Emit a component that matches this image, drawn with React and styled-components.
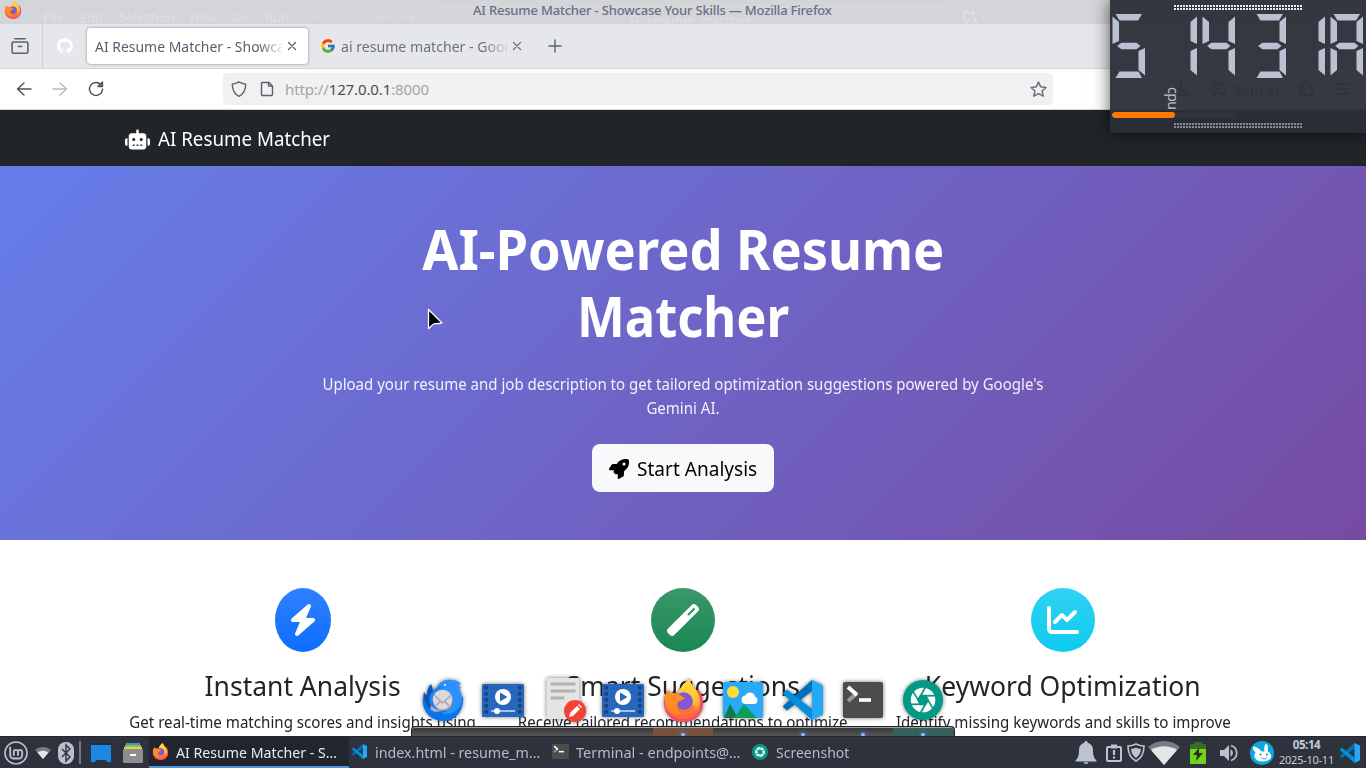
import React from "react";
import styled, { createGlobalStyle, css } from "styled-components";
import { FaRobot, FaRocket, FaBolt, FaWandMagic, FaChartLine, FaGithub } from "react-icons/fa6";
import { FcGoogle } from "react-icons/fc";

const GlobalStyle = createGlobalStyle`
  * { box-sizing: border-box; }
  body { margin: 0; background: #fff; font-family: "Noto Sans", sans-serif; }
  svg { display: block; flex: none; }
  h1, h3, p { margin: 0; }
`;

const Desktop = styled.div`
  position: relative;
  display: flex;
  flex-direction: column;
  width: 1366px;
  height: 768px;
  overflow: hidden;
  white-space: nowrap;
`;

/* Single run of text; $ls tightens its spacing, $sx condenses its letters */
const Text = styled.span`
  display: block;
  flex: none;
  width: ${(p) => (p.$w ? `${p.$w}px` : "auto")};
  letter-spacing: ${(p) => p.$ls || 0}px;
  white-space: nowrap;
  ${(p) => p.$sx && css`
    transform: scaleX(${p.$sx});
    transform-origin: ${p.$left ? "left" : "center"};
  `}
`;

/* ---------- window title ---------- */
const TitleBar = styled.header`
  position: relative;
  flex: none;
  height: 24px;
  background: #d4d5d8;
  overflow: hidden;
`;
const GhostMenu = styled.div`
  display: flex;
  align-items: center;
  height: 24px;
  padding: 10px 0 0 15px;
  font-size: 13px;
  line-height: 14px;
  color: #dfe0e3;
`;
const GhostItem = styled.span`
  flex: none;
  width: ${(p) => p.$w}px;
`;
const GhostSearch = styled.div`
  display: flex;
  justify-content: center;
  gap: 6px;
  width: 521px;
  height: 30px;
  margin-top: 10px;
  padding-top: 5px;
  border: 1px solid #dadbdd;
  border-radius: 6px;
`;
const WindowTitle = styled.div`
  position: absolute;
  inset: 0;
  padding-left: 473px;
  color: #687086;
  font-size: 13px;
  font-weight: 500;
  line-height: 21px;
`;
const WindowIcon = styled.div`
  position: absolute;
  left: 4px;
  top: 1px;
`;

/* ---------- tabs ---------- */
const TabStrip = styled.nav`
  display: flex;
  align-items: center;
  flex: none;
  height: 45px;
  background: #e6e7eb;
  border-bottom: 1px solid #d5d6da;
  color: #5b5f70;
  font-size: 15px;
`;
const SidebarButton = styled.div`
  display: flex;
  align-items: center;
  justify-content: center;
  width: 43px;
  height: 44px;
  padding-right: 3px;
  border-right: 1px solid #cfd0d5;
`;
const PinnedTab = styled.div`
  display: flex;
  justify-content: center;
  width: 44px;
  color: #fff;
`;
const Tab = styled.div`
  display: flex;
  align-items: center;
  gap: 3px;
  height: 36px;
  width: ${(p) => p.$w}px;
  padding: 0 8px;
  margin-left: ${(p) => p.$ml || 0}px;
  border-radius: 4px;
  color: #6c7085;
  ${(p) => p.$active && css`
    background: #fff;
    color: #5a5d6d;
    box-shadow: 0 0 3px rgba(60, 60, 70, 0.55);
  `}
`;
const TabLabel = styled.div`
  flex: none;
  width: ${(p) => p.$w}px;
  margin-left: ${(p) => p.$l || 0}px;
  overflow: hidden;
  mask-image: linear-gradient(90deg, #000 calc(100% - 24px), rgba(0, 0, 0, 0.15));
`;
const NewTab = styled.div`
  margin-left: 25px;
`;

/* ---------- address bar ---------- */
const Toolbar = styled.div`
  display: flex;
  align-items: center;
  flex: none;
  height: 41px;
  padding-left: 16px;
  background: #fff;
  border-bottom: 1px solid #d5d6da;
  color: #4c4f5c;
`;
const NavButtons = styled.div`
  display: flex;
  gap: 20px;
  width: 207px;
`;
const UrlField = styled.div`
  display: flex;
  align-items: center;
  width: 830px;
  height: 32px;
  padding: 0 8px;
  border-radius: 4px;
  background: #f1f1f1;
  font-size: 15px;
  color: #a3a4a9;
`;
const UrlIcons = styled.div`
  display: flex;
  gap: 12px;
  width: 54px;
  color: #5d6070;
`;
const Host = styled.b`
  font-weight: 400;
  color: #4a4d59;
`;
const StarSlot = styled.div`
  margin-left: auto;
  margin-right: -2px;
  color: #6a6d7c;
`;
const Extras = styled.div`
  display: flex;
  align-items: center;
  gap: 8px;
  margin-left: 120px;
  color: #6b6e7a;
  font-size: 14px;
`;

/* ---------- site ---------- */
const SiteNav = styled.div`
  display: flex;
  align-items: center;
  gap: 8px;
  flex: none;
  height: 56px;
  padding: 2px 0 0 125px;
  background: #212529;
  color: #fff;
  font-size: 20px;
  line-height: 30px;
`;
const Hero = styled.section`
  display: flex;
  flex-direction: column;
  align-items: center;
  flex: none;
  height: 374px;
  padding: 48px 0;
  background: linear-gradient(135deg, #667eea 0%, #764ba2 100%);
  color: #fff;
  text-align: center;
`;
const HeroTitle = styled.h1`
  display: flex;
  flex-direction: column;
  align-items: center;
  padding-top: 1px;
  margin-bottom: 23px;
  font-size: 55px;
  font-weight: 700;
  line-height: 67.2px;
`;
const Lead = styled.p`
  display: flex;
  flex-direction: column;
  align-items: center;
  margin-bottom: 24px;
  font-size: 16px;
  line-height: 24px;
  color: rgba(255, 255, 255, 0.9);
`;
const StartButton = styled.button`
  display: flex;
  align-items: center;
  gap: 8px;
  width: 182px;
  height: 48px;
  padding: 2px 0 0 17px;
  border: 0;
  border-radius: 8px;
  background: #f8f9fa;
  color: #000;
  font: 400 20px/30px "Noto Sans", sans-serif;
`;
const Features = styled.section`
  display: grid;
  grid-template-columns: repeat(3, 380px);
  justify-content: center;
  flex: none;
  height: 196px;
  padding-top: 48px;
  overflow: hidden;
  background: #fff;
  color: #212529;
`;
const Feature = styled.article`
  display: flex;
  flex-direction: column;
  align-items: center;
`;
const Disc = styled.div`
  display: flex;
  align-items: center;
  justify-content: center;
  width: ${(p) => p.$w}px;
  height: 64px;
  margin-bottom: 16.5px;
  border-radius: 50%;
  background: linear-gradient(180deg, ${(p) => p.$from}, ${(p) => p.$to});
  color: #fff;
`;
const FeatureTitle = styled.h3`
  margin-bottom: 8px;
  font-size: 28px;
  font-weight: 400;
  line-height: 33.6px;
`;
const FeatureText = styled.p`
  font-size: 16px;
  line-height: 24px;
`;

/* ---------- desktop clock widget ---------- */
const Widget = styled.aside`
  position: absolute;
  top: 0;
  right: 0;
  display: flex;
  flex-direction: column;
  width: 256px;
  height: 133px;
  padding: 5px 2px 0;
  background: rgba(42, 45, 55, 0.945);
  box-shadow: 0 0 16px rgba(0, 0, 0, 0.65);
`;
const Grip = styled.div`
  flex: none;
  width: 128px;
  height: 5px;
  margin-left: 62px;
  background:
    repeating-linear-gradient(90deg, transparent 0 2px, #30343e 2px 3px),
    linear-gradient(${(p) => p.$c} 0 2px, transparent 2px 3px, ${(p) => p.$c} 3px);
`;
const CpuLabel = styled.div`
  flex: none;
  width: 18px;
  height: 31px;
  padding-top: 9px;
  margin-left: 52px;
  writing-mode: vertical-rl;
  font-size: 14px;
  letter-spacing: -0.5px;
  line-height: 18px;
  color: #b9c1d0;
`;
const CpuTrack = styled.div`
  flex: none;
  width: 124px;
  height: 6px;
  margin: 3px 0 5px;
  border-radius: 3px;
  background: #30323d;
  overflow: hidden;
`;
const CpuFill = styled.div`
  width: 63px;
  height: 6px;
  border-radius: 3px;
  background: #ff7b00;
`;

/* ---------- dock ---------- */
const Dock = styled.div`
  position: absolute;
  left: 411px;
  top: 676px;
  width: 544px;
  height: 60px;
`;
const Shelf = styled.div`
  position: absolute;
  left: 0;
  right: 0;
  bottom: 0;
  display: grid;
  grid-template-columns: repeat(9, 60px);
  padding: 0 1px;
  height: 10px;
  border: 1px solid #222;
  border-bottom: 0;
  border-radius: 4px 4px 0 0;
  box-shadow: inset 0 1px 0 #a0a0a0;
  background: linear-gradient(#333, #565656);
`;
const Slot = styled.div`
  display: flex;
  justify-content: center;
  align-items: flex-end;
  margin-top: 1px;
  background: ${(p) => p.$tint || "transparent"};
`;
const Glow = styled.i`
  width: 4px;
  height: 3px;
  border-radius: 2px;
  background: #8ab8ff;
  box-shadow: 0 0 4px 1px rgba(70, 130, 230, 0.7);
`;
const DockIcons = styled.div`
  position: relative;
  display: grid;
  grid-template-columns: repeat(9, 60px);
  justify-items: center;
  align-items: center;
  height: 48px;
  padding-left: 2px;
  filter: drop-shadow(0 0 2px rgba(0, 0, 0, 0.55));
`;
const Cursor = styled.div`
  position: absolute;
  left: 425px;
  top: 307px;
`;

/* ---------- task bar ---------- */
const TaskBar = styled.footer`
  display: flex;
  align-items: center;
  flex: none;
  height: 32px;
  background: #2d323c;
  border-top: 1px solid #23272e;
  color: #b3bccb;
  font-size: 15px;
  z-index: 2;
`;
const Launchers = styled.div`
  display: flex;
  align-items: center;
  width: 149px;
  padding-left: 4px;
`;
const Task = styled.div`
  display: flex;
  align-items: center;
  gap: 8px;
  width: 200px;
  height: 31px;
  padding: 0 0 2px 3px;
  ${(p) => p.$active && css`
    background: #21252c;
    color: #e8ecf2;
    box-shadow: inset 0 -2px #5294e2;
  `}
`;
const TaskIcon = styled.div`
  display: flex;
  justify-content: center;
  width: 16px;
`;
const Divider = styled.i`
  width: 2px;
  height: 23px;
  margin: 0 10px 0 5px;
  background: #727883;
`;
const Tray = styled.div`
  display: flex;
  align-items: center;
  margin-left: auto;
  padding-right: 6px;
  color: #bcc3d0;
`;
const Clock = styled.div`
  display: flex;
  flex-direction: column;
  align-items: center;
  width: 57px;
  margin: -1px 5px 0 4px;
  font-size: 11px;
  line-height: 15px;
  color: #c5cbd6;
`;
const Time = styled.b`
  font-size: 11.5px;
  letter-spacing: -0.4px;
`;
const Pad = styled.div`
  flex: none;
  margin-left: ${(p) => p.$l || 0}px;
`;

/* ---------- drawings ---------- */
const Line = ({ s = 16, w = 1.4, children, ...r }) => (
  <svg width={s} height={s} viewBox="0 0 16 16" fill="none" stroke="currentColor" strokeWidth={w} strokeLinecap="round" strokeLinejoin="round" {...r}>{children}</svg>
);
const Close = () => <Line s={14}><path d="M4 4l8 8M12 4l-8 8" /></Line>;

function Firefox({ s }) {
  return (
    <svg width={s} height={s} viewBox="0 0 42 44">
      <defs>
        <linearGradient id="fxBody" x1="0" y1="0" x2=".4" y2="1">
          <stop offset="0" stopColor="#ffb02e" /><stop offset=".45" stopColor="#ff7a22" /><stop offset="1" stopColor="#ff6a3c" />
        </linearGradient>
        <linearGradient id="fxFlame" x1="0" y1="0" x2="0" y2="1">
          <stop offset="0" stopColor="#ffe23c" /><stop offset=".6" stopColor="#ffbd35" /><stop offset="1" stopColor="#ff5a4d" />
        </linearGradient>
      </defs>
      <path d="M21 44C8 44 1 35 1 24c0-4 1-9 5-13 0 2 1 3 2 4 3-1 6-1 9 0 1-8 5-11 10-15 1 5 4 7 7 11 3 0 4 2 4 2 2 4 3 8 3 12 0 12-9 19-20 19z" fill="#fb4a66" />
      <path d="M27 0c1 5 5 8 8 13 4 7 4 17-2 23-6 5-14 3-18-2L16 14C18 7 22 4 27 0z" fill="url(#fxFlame)" />
      <circle cx="21" cy="23" r="9.5" fill="#8157d5" />
      <path d="M2 18c1-3 2-5 4-7 0 2 1 3 2 4 4-1 8 0 11 3l3 1c0 3-6 3-7 5-1 6 4 9 9 7 4-2 6-4 9-4-1 5-7 8-12 8 7 2 14-1 18-7-2 8-9 13-17 13C8 41 0 30 2 18z" fill="url(#fxBody)" />
      <path d="M3 25c-1-5 0-10 3-14 0 2 1 3 2 4 4-1 8 0 11 3l3 1c0 3-6 3-7 5-3 5 1 11 6 12-8 2-17-2-18-11z" fill="#ff8b24" />
    </svg>
  );
}

const VsCode = ({ s, ghost }) => (
  <svg width={s} height={s} viewBox="0 0 40 40">
    <path d="M29 0v11L4 30.500l-3.500-3a1.500 1.500 0 0 1 0-2z" fill={ghost ? "#c9d9e6" : "#0071b8"} />
    <path d="M29 40V29L4 9.500l-3.500 3a1.500 1.500 0 0 0 0 2z" fill={ghost ? "#c9d9e6" : "#0090de"} />
    <path d="M29 0l9.500 4.500a2 2 0 0 1 1.500 2v27a2 2 0 0 1-1.500 2L29 40z" fill={ghost ? "#c6dbec" : "#24a8f7"} />
  </svg>
);

const Aperture = ({ s }) => (
  <svg width={s} height={s} viewBox="0 0 40 40">
    <circle cx="20" cy="20" r="20" fill="#049887" />
    <circle cx="20" cy="20" r="12.300" fill="#fff" />
    {[0, 60, 120, 180, 240, 300].map((a) => (
      <path key={a} d="M15 20.500L22.500 7" stroke="#049887" strokeWidth="1.700" transform={`rotate(${a} 20 20)`} />
    ))}
    <path d="M17 14.800h6l3 5.200-3 5.200h-6L14 20z" fill="#049887" />
  </svg>
);

const Terminal = ({ s }) => (
  <svg width={s} height={s * 0.9} viewBox="0 0 40 36">
    <rect width="40" height="36" rx="2" fill="#4c4c4c" />
    <path d="M5 19l8-7" stroke="#9d9d9d" strokeWidth="4" />
    <path d="M5 5l9 8" stroke="#fff" strokeWidth="4" />
    <path d="M16 18h12" stroke="#fff" strokeWidth="3.600" />
  </svg>
);

const Video = () => (
  <svg width="42" height="33" viewBox="0 0 42 33">
    <rect width="42" height="33" rx="1.500" fill="#2666bd" />
    {[1, 7, 13, 19, 25].map((y) => <path key={y} d={`M2.500 ${y + 1}h3.500v3.500H2.500zM36 ${y + 1}h3.500v3.500H36z`} fill="#17437f" />)}
    <circle cx="21" cy="13" r="8" fill="#fff" />
    <path d="M18 8.500l7.500 4.500-7.500 4.500z" fill="#2666bd" />
    <path d="M9 27h24" stroke="#a9c4e8" strokeWidth="2" />
    <circle cx="15" cy="27" r="3" fill="#fff" />
  </svg>
);

const Notes = () => (
  <svg width="48" height="46" viewBox="-5.500 0 48 46">
    <rect x="2" y="1" width="33" height="41" rx="2" fill="#e4e4e4" />
    <path d="M6 7h25M6 14h25M6 21h14" stroke="#b2b2b2" strokeWidth="3" />
    <circle cx="30.500" cy="34" r="11" fill="#f34235" />
    <path d="M24.500 40l1-4 7-7 3 3-7 7z" fill="#fff" />
    <path d="M33.500 28l1-1 3 3-1 1z" fill="#fff" />
  </svg>
);

const Photos = () => (
  <svg width="40" height="36" viewBox="0 0 40 36">
    <rect width="40" height="36" rx="2" fill="#28aaf9" />
    <circle cx="10" cy="10" r="6" fill="#fddc36" />
    <path d="M22 22h10a4 4 0 0 0 0-7.500 5 5 0 0 0-9.500-1A4.300 4.300 0 0 0 22 22z" fill="#fff" />
    <path d="M1 36l6-14 8 14z" fill="#0c7a43" />
    <path d="M11 36l10-14 13 14z" fill="#0f9d58" />
  </svg>
);

const Thunderbird = () => (
  <svg width="42" height="42" viewBox="0 0 42 42">
    <path d="M9 5c2 5 3 8 2 12L8 30C3 27 0 20 2 13c1 2 2 3 3 3 0-5 1-8 4-11z" fill="#0a55b5" />
    <path d="M1 18c3 8 5 12 12 15l20-3 8-13c1 15-7 25-20 25C8 42-1 31 1 18z" fill="#0875ed" />
    <path d="M15 8c3-6 9-8 15-7 4 0 7 2 9 4l-3 1 3 3-2 1c3 4 4 10 2 15-3 8-12 12-20 9 8-2 12-7 12-13-1-7-8-11-16-9z" fill="#2b91ff" />
    <path d="M11 12c3-5 8-5 13-3-5 0-9 2-11 5-4 6-1 14 4 17C8 30 4 19 11 12z" fill="#1c83f5" />
    <circle cx="20.500" cy="20.500" r="9.800" fill="#dadadd" />
    <path d="M12 16l8.500 8 9-8M14 27l4.500-5M27 27l-4.500-5" fill="none" stroke="#a2a2a8" strokeWidth="1.200" />
    <circle cx="23" cy="6" r="1" fill="#fff" />
  </svg>
);

const Mint = () => (
  <svg width="24" height="24" viewBox="0 0 24 24" fill="none" stroke="#bcc2d0" strokeLinecap="round">
    <circle cx="12" cy="12" r="11" strokeWidth="1.600" />
    <path d="M6.200 6.500v7.500a3.500 3.500 0 0 0 3.500 3.500h5a3.500 3.500 0 0 0 3.500-3.500v-3a2.100 2.100 0 0 0-4.200 0v3M14 11a2.100 2.100 0 0 0-4.200 0v3" strokeWidth="1.900" />
  </svg>
);

const Fan = ({ w, h, dim }) => (
  <svg width={w} height={h} viewBox="0 0 32 24">
    <path d="M0 6C9-2 23-2 32 6L16 24z" fill="#777b83" />
    <path d={dim ? "M5 11c7-5 15-5 22 0L16 24z" : "M3 9c8-5 18-5 26 0L16 24z"} fill="#e5e6e8" />
  </svg>
);

const Bluetooth = () => (
  <svg width="16" height="22" viewBox="0 0 16 22">
    <rect width="16" height="22" rx="7.500" fill="#b9bfcd" />
    <path d="M4 7l8 8-4 4V3l4 4-8 8" fill="none" stroke="#2d323c" strokeWidth="1.400" />
  </svg>
);

const DesktopIcon = () => (
  <svg width="20" height="19" viewBox="0 0 20 19">
    <path d="M0 0h20v3H0z" fill="#202d3d" /><path d="M0 2h20v17h-4l-1-2H5l-1 2H0z" fill="#1d87e6" />
  </svg>
);
const Files = () => (
  <svg width="20" height="20" viewBox="0 0 20 20">
    <path d="M3 0h14v2H3z" fill="#4a90d9" /><path d="M2 2h16v2H2z" fill="#79c94c" /><path d="M1 4h18v2H1z" fill="#f3c94b" />
    <rect y="6" width="20" height="14" rx="1" fill="#8e8e8e" /><path d="M7 12h6" stroke="#fff" strokeWidth="2" />
  </svg>
);

const Bell = () => (
  <svg width="22" height="23" viewBox="0 0 22 23" fill="currentColor">
    <path d="M11 0c1 0 1.600.7 1.600 1.700C16 2.500 18 5 18 9c0 6 1 8 3.500 10.500v1h-21v-1C3 17 4 15 4 9c0-4 2-6.500 5.400-7.300C9.400.7 10 0 11 0zM8.500 21.300h5a2.500 1.700 0 0 1-5 0z" />
  </svg>
);
const Clipboard = () => (
  <svg width="16" height="18" viewBox="0 0 16 18" fill="none" stroke="currentColor" strokeWidth="2">
    <rect x="1" y="3" width="14" height="14" rx="1" /><path d="M5 2.500h6" strokeWidth="4" /><path d="M8 6v5M8 12.500v2" strokeWidth="2.200" />
  </svg>
);
const Shield = () => (
  <svg width="18" height="19" viewBox="0 0 18 19" fill="currentColor" stroke="currentColor">
    <path d="M9 1c3 1.500 5 2 8 2 0 7-2 12-8 15C3 15 1 10 1 3c3 0 5-.5 8-2z" fill="none" strokeWidth="1.600" />
    <path d="M9 4.500c2 1 3 1.300 5 1.500-.3 4-2 7-5 9-3-2-4.700-5-5-9 2-.2 3-.5 5-1.500z" stroke="none" />
  </svg>
);
const Battery = () => (
  <svg width="16" height="22" viewBox="0 0 16 22">
    <path d="M4 0h8v2h3a1 1 0 0 1 1 1v5H0V3a1 1 0 0 1 1-1h3z" fill="#3d6a24" /><path d="M0 7h16v14a1 1 0 0 1-1 1H1a1 1 0 0 1-1-1z" fill="#71d31b" />
    <path d="M9 6l-6 7h4l-1 6 7-8H9z" fill="#25301f" />
  </svg>
);
const Speaker = () => (
  <svg width="18" height="18" viewBox="0 0 18 18" fill="currentColor">
    <path d="M0 6h4l5-5v16l-5-5H0zM10.500 5a4.500 4.500 0 0 1 0 8z" />
    <path d="M11 1.500a7.800 7.800 0 0 1 0 15" fill="none" stroke="currentColor" strokeWidth="1.700" />
  </svg>
);
const Bunny = () => (
  <svg width="24" height="24" viewBox="0 0 24 24">
    <circle cx="12" cy="12" r="12" fill="#0da7df" />
    <path d="M3 6c1-1.500 6 1 8.500 4.500h3C14 7 14.500 3 16 3s2.500 3 1.800 7.500c2.700 1.500 4 3.500 3.200 6-1.500 4-10.500 5.500-14 2.500-3-2-3.300-5-1.500-7.500C4 10 2.300 7.500 3 6z" fill="#fff" />
    <circle cx="10.500" cy="13.500" r="1" fill="#0b7cae" /><circle cx="17" cy="13.500" r="1" fill="#0b7cae" /><path d="M11 16.500c2 2 4.500 2 6 0" stroke="#0da7df" fill="none" />
  </svg>
);

const SEGMENTS = {
  a: "3,0 29.500,0 25.500,6.500 7,6.500",
  b: "32.500,2.500 26,8 26,27 32.500,30",
  c: "32.500,34 26,37 26,56 32.500,61.500",
  d: "3,64 29.500,64 26,57.500 7,57.500",
  e: "0,34 6.500,37 6.500,56 0,61.500",
  f: "0,2.500 6.500,8 6.500,27 0,30",
  g: "4.500,32 9,28.700 24,28.700 28,32 24,35.300 9,35.300",
};
const CELLS = [["afgcd", 0.5], ["bc", 52.5], ["fgbc", 90.5], ["abgcd", 141.5], ["bc", 180.5], ["abcefg", 218.5]];
const SegmentClock = () => (
  <svg width="252" height="68" viewBox="0 -4 252 68" fill="#bac2d1">
    {CELLS.map(([on, x]) => (
      <g key={x} transform={`translate(${x} 0)`}>
        {on.split("").map((k) => <polygon key={k} points={SEGMENTS[k]} />)}
      </g>
    ))}
  </svg>
);

const FEATURES = [
  { icon: <FaBolt size={32} />, w: 56, from: "#2f80ff", to: "#0d6efd", title: "Instant Analysis", text: "Get real-time matching scores and insights using" },
  { icon: <FaWandMagic size={32} />, w: 64, from: "#3b9769", to: "#198754", title: "Smart Suggestions", text: "Receive tailored recommendations to optimize" },
  { icon: <FaChartLine size={32} />, w: 64, from: "#31d2f2", to: "#0dcaf0", title: "Keyword Optimization", text: "Identify missing keywords and skills to improve" },
];
const RUNNING = [null, null, null, null, "#76503f", null, "none", "none", "#35605b"];

export default function App() {
  return (
    <Desktop>
      <GlobalStyle />
      <TitleBar>
        <GhostMenu>
          <Pad><VsCode s={12} ghost /></Pad>
          <Pad $l={16} />
          <GhostItem $w={37}>File</GhostItem><GhostItem $w={39}>Edit</GhostItem><GhostItem $w={69}>Selection</GhostItem>
          <GhostItem $w={44}>View</GhostItem><GhostItem $w={33}>Go</GhostItem><GhostItem $w={43}>Run</GhostItem><GhostItem $w={67}>···</GhostItem>
          <Line s={15} w={1}><path d="M14 8H2M7 3L2 8l5 5" /></Line><Pad $l={11} />
          <Line s={15} w={1}><path d="M2 8h12M9 3l5 5-5 5" /></Line><Pad $l={13} />
          <GhostSearch><Line s={14} w={1.2}><circle cx="7" cy="6" r="4" /><path d="M10 9l4 4" /></Line>resume_matcher</GhostSearch>
          <Pad $l={12}><Line s={16}><path d="M8 3H2v9h2v2l4-3M11 1v6M8 4h6M11 14l2-5 2 5" /></Line></Pad>
          <Pad $l={3}><Line s={9}><path d="M2 5l6 6 6-6" /></Line></Pad>
        </GhostMenu>
        <WindowTitle><Text $ls={-0.19}>AI Resume Matcher - Showcase Your Skills — Mozilla Firefox</Text></WindowTitle>
        <WindowIcon><Firefox s={18} /></WindowIcon>
      </TitleBar>

      <TabStrip>
        <SidebarButton><Line s={18}><path d="M3.500 1.500h9M2 4.500h12a1 1 0 0 1 1 1V13a1.500 1.500 0 0 1-1.500 1.500h-11A1.500 1.500 0 0 1 1 13V5.500a1 1 0 0 1 1-1zM6.500 8.500h3" /></Line></SidebarButton>
        <PinnedTab><FaGithub size={16} /></PinnedTab>
        <Tab $active $w={221}><TabLabel $w={187}><Text $sx={0.93} $left>AI Resume Matcher - Showcase</Text></TabLabel><Close /></Tab>
        <Tab $w={210} $ml={4}><FcGoogle size={16} /><TabLabel $w={166} $l={2}><Text $sx={0.94} $left>ai resume matcher - Google</Text></TabLabel><Close /></Tab>
        <NewTab><Line><path d="M8 2v12M2 8h12" /></Line></NewTab>
      </TabStrip>

      <Toolbar>
        <NavButtons>
          <Line><path d="M15 8H1.500M8 2L1.500 8 8 14" /></Line>
          <Line color="#b8b9be"><path d="M1 8h13.500M8 2l6.500 6L8 14" /></Line>
          <Line><path d="M13.500 4.500A6.500 6.500 0 1 0 14.500 8M14.500 1v4.500H10z" /></Line>
        </NavButtons>
        <UrlField>
          <UrlIcons>
            <Line><path d="M8 .8c2.300 1.400 4.500 2 6.700 2.300 0 6-1.700 9.900-6.700 12.200C3 13 1.300 9.100 1.300 3.100 3.500 2.800 5.700 2.200 8 .8z" /></Line>
            <Line><path d="M3 1.500h7L13.500 5v8.500a1 1 0 0 1-1 1H3.500a1 1 0 0 1-1-1V2.500a1 1 0 0 1 1-1zM9.500 1.500V5h4" /></Line>
          </UrlIcons>
          <Text $ls={-0.12}>http://<Host>127.0.0.1</Host>:8000</Text>
          <StarSlot><Line s={17}><path d="M8 1l2.100 4.500 4.900.6-3.600 3.300 1 4.900L8 11.900l-4.400 2.400 1-4.900L1 6.100l4.900-.6z" /></Line></StarSlot>
        </UrlField>
        <Extras>
          <Line><path d="M8 1v9M4 6.500l4 4 4-4M1 11v3h14v-3" /></Line><Pad $l={5} />
          <Line><circle cx="8" cy="8" r="7" /><circle cx="8" cy="6" r="2.500" /><path d="M4 12h8" /></Line>
          <Text $w={46}>Sign in</Text><Pad $l={2} />
          <Line><path d="M2 5h4V3a2 2 0 0 1 4 0v2h4v9H2v-3h2a1.500 1.500 0 0 0 0-3H2z" /></Line><Pad $l={4} />
          <Line><path d="M2 3h12M2 8h12M2 13h12" /></Line>
        </Extras>
      </Toolbar>

      <SiteNav><FaRobot size={25} /><Text $sx={0.937} $left>AI Resume Matcher</Text></SiteNav>
      <Hero>
        <HeroTitle><Text $sx={0.952}>AI-Powered Resume</Text><Text $sx={0.922}>Matcher</Text></HeroTitle>
        <Lead>
          <Text $sx={0.939}>Upload your resume and job description to get tailored optimization suggestions powered by Google's</Text>
          <Text $sx={0.939}>Gemini AI.</Text>
        </Lead>
        <StartButton><FaRocket size={20} /><Text $sx={0.953} $left>Start Analysis</Text></StartButton>
      </Hero>
      <Features>
        {FEATURES.map((f) => (
          <Feature key={f.title}>
            <Disc $w={f.w} $from={f.from} $to={f.to}>{f.icon}</Disc>
            <FeatureTitle><Text $sx={0.946}>{f.title}</Text></FeatureTitle>
            <FeatureText><Text $sx={0.944}>{f.text}</Text></FeatureText>
          </Feature>
        ))}
      </Features>

      <Dock>
        <Shelf>{RUNNING.map((t, i) => <Slot key={i} $tint={t}>{t && <Glow />}</Slot>)}</Shelf>
        <DockIcons>
          <Thunderbird /><Video /><Notes /><Video /><Firefox s={43} /><Photos /><VsCode s={40} /><Terminal s={40} /><Aperture s={40} />
        </DockIcons>
      </Dock>

      <TaskBar>
        <Launchers>
          <Mint /><Pad $l={7} /><Fan w={16} h={14} dim /><Pad $l={7} /><Bluetooth /><Divider />
          <DesktopIcon /><Pad $l={12} /><Files />
        </Launchers>
        <Task $active><TaskIcon><Firefox s={17} /></TaskIcon><Text $sx={0.944} $left>AI Resume Matcher - S…</Text></Task>
        <Task><TaskIcon><VsCode s={15} /></TaskIcon><Text $sx={0.952} $left>index.html - resume_m…</Text></Task>
        <Task><TaskIcon><Terminal s={17} /></TaskIcon><Text $sx={0.966} $left>Terminal - endpoints@…</Text></Task>
        <Task><TaskIcon><Aperture s={16} /></TaskIcon><Text $sx={0.935} $left>Screenshot</Text></Task>
        <Tray>
          <Bell /><Pad $l={9} /><Clipboard /><Pad $l={5} /><Shield /><Pad $l={3} /><Fan w={32} h={24} /><Pad $l={10} />
          <Battery /><Pad $l={14} /><Speaker /><Pad $l={12} /><Bunny />
          <Clock><Time>05:14</Time><Text $ls={-0.25}>2025-10-11</Text></Clock>
          <VsCode s={20} />
        </Tray>
      </TaskBar>

      <Widget>
        <Grip $c="#eef0f2" />
        <SegmentClock />
        <CpuLabel>cpu</CpuLabel>
        <CpuTrack><CpuFill /></CpuTrack>
        <Grip $c="#8b8c91" />
      </Widget>
      <Cursor>
        <svg width="20" height="26" viewBox="0 0 20 26"><path d="M2 1.500v19c1.500 0 3-3.500 5-4.500 3-1 7 0 8.500-1z" transform="translate(1.500 1)" fill="#000" stroke="#fff" strokeWidth="1.300" strokeLinejoin="round" /></svg>
      </Cursor>
    </Desktop>
  );
}
